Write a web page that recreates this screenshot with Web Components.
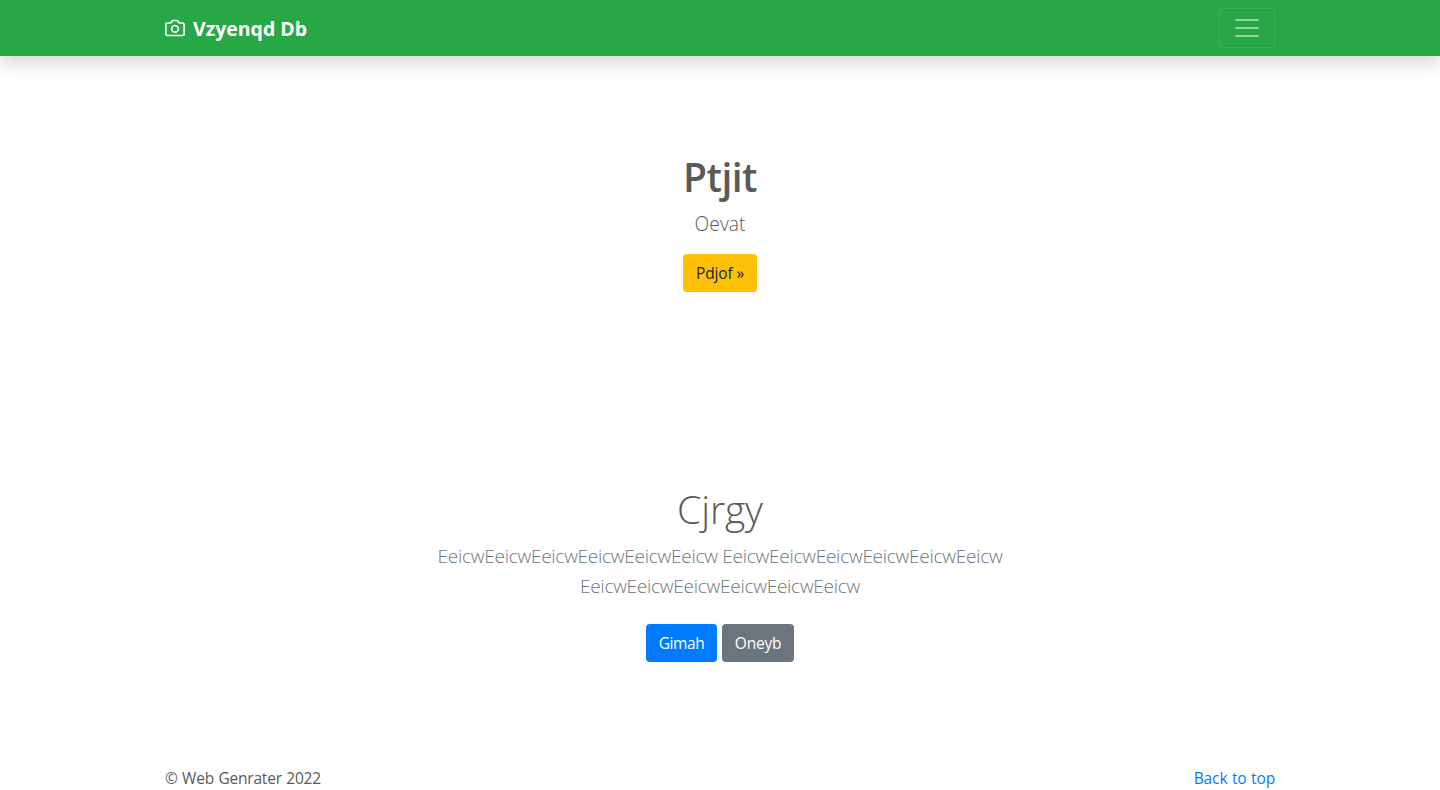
<!DOCTYPE html>
<html lang="en">
<head>
<meta charset="utf-8">
<title>Vzyenqd Db</title>
<style>
html{overflow:hidden;background:#fff}
body{margin:0;font:400 15.5px/24px "Open Sans","Noto Sans",sans-serif;color:#5a5a5a}
</style>
</head>
<body>
<site-navbar>Vzyenqd Db</site-navbar>
<main>
  <hero-section class="first">
    <span slot="title">Ptjit</span>
    <span slot="lead">Oevat</span>
    <link-button variant="warning">Pdjof »</link-button>
  </hero-section>
  <hero-section class="second" kind="light">
    <span slot="title">Cjrgy</span>
    <span slot="lead">EeicwEeicwEeicwEeicwEeicwEeicw EeicwEeicwEeicwEeicwEeicwEeicw EeicwEeicwEeicwEeicwEeicwEeicw</span>
    <link-button variant="primary">Gimah</link-button>
    <link-button variant="secondary">Oneyb</link-button>
  </hero-section>
</main>
<site-footer>© Web Genrater 2022<a slot="link">Back to top</a></site-footer>
<script>
const define = (name, html) => customElements.define(name, class extends HTMLElement {
  constructor() {
    super();
    this.attachShadow({ mode: 'open' }).innerHTML = html;
  }
});

define('site-navbar', `
<style>
:host{display:block;background:#28a745;box-shadow:0 8px 16px rgba(0,0,0,.15)}
.container{box-sizing:border-box;width:1140px;height:56px;margin:0 auto;padding:0 15px;display:flex;align-items:center;justify-content:space-between}
.brand{display:flex;align-items:center;gap:8px;color:#fff;font-size:19.5px;font-weight:700;line-height:30px}
.brand svg{display:block}
.brand span{padding-top:2px}
.toggler{box-sizing:border-box;width:56px;height:40px;border:1px solid rgba(255,255,255,.1);border-radius:4px;background:none;padding:0;display:flex;align-items:center;justify-content:center}
.toggler svg{display:block}
</style>
<div class="container">
  <div class="brand">
    <svg width="20" height="20" viewBox="0 0 24 24" fill="none" stroke="currentColor" stroke-width="2" stroke-linecap="round" stroke-linejoin="round"><path d="M23 19a2 2 0 0 1-2 2H3a2 2 0 0 1-2-2V8a2 2 0 0 1 2-2h4l2-3h6l2 3h4a2 2 0 0 1 2 2z"/><circle cx="12" cy="13" r="4"/></svg>
    <span><slot></slot></span>
  </div>
  <button class="toggler" aria-label="Toggle navigation">
    <svg width="30" height="30" viewBox="0 0 30 30" stroke="rgba(255,255,255,.5)" stroke-linecap="round" stroke-miterlimit="10" stroke-width="2"><path d="M4 7h22M4 15h22M4 23h22"/></svg>
  </button>
</div>`);

define('hero-section', `
<style>
:host{display:block;box-sizing:border-box;padding:97px 0 0;text-align:center}
:host(.first){height:332px}
:host(.second){height:378px}
h1{margin:0 0 8px;font-size:39px;line-height:48px;font-weight:600;letter-spacing:-.55px}
.lead{width:585px;margin:0 auto 15px;font-size:19.3px;line-height:30px;font-weight:300}
.actions{display:flex;justify-content:center;gap:5px}
:host([kind=light]) h1{font-weight:300;letter-spacing:-.1px}
:host([kind=light]) .lead{color:#6c757d;font-size:19px;letter-spacing:-.26px;margin-bottom:23px}
</style>
<h1><slot name="title"></slot></h1>
<p class="lead"><slot name="lead"></slot></p>
<div class="actions"><slot></slot></div>`);

define('link-button', `
<style>
:host{display:block;box-sizing:border-box;height:38px;padding:7px 0;border-radius:4px;color:#fff}
:host([variant=warning]){width:74px;background:#ffc107;color:#212529;letter-spacing:-.15px}
:host([variant=primary]){width:71px;background:#007bff;letter-spacing:-.4px}
:host([variant=secondary]){width:72px;background:#6c757d;letter-spacing:-.25px}
</style>
<slot></slot>`);

define('site-footer', `
<style>
:host{box-sizing:border-box;display:flex;justify-content:space-between;width:1140px;margin:0 auto;padding:0 15px;letter-spacing:-.2px;word-spacing:.6px}
::slotted(a){color:#007bff;letter-spacing:-.12px}
</style>
<span><slot></slot></span><slot name="link"></slot>`);
</script>
</body>
</html>
